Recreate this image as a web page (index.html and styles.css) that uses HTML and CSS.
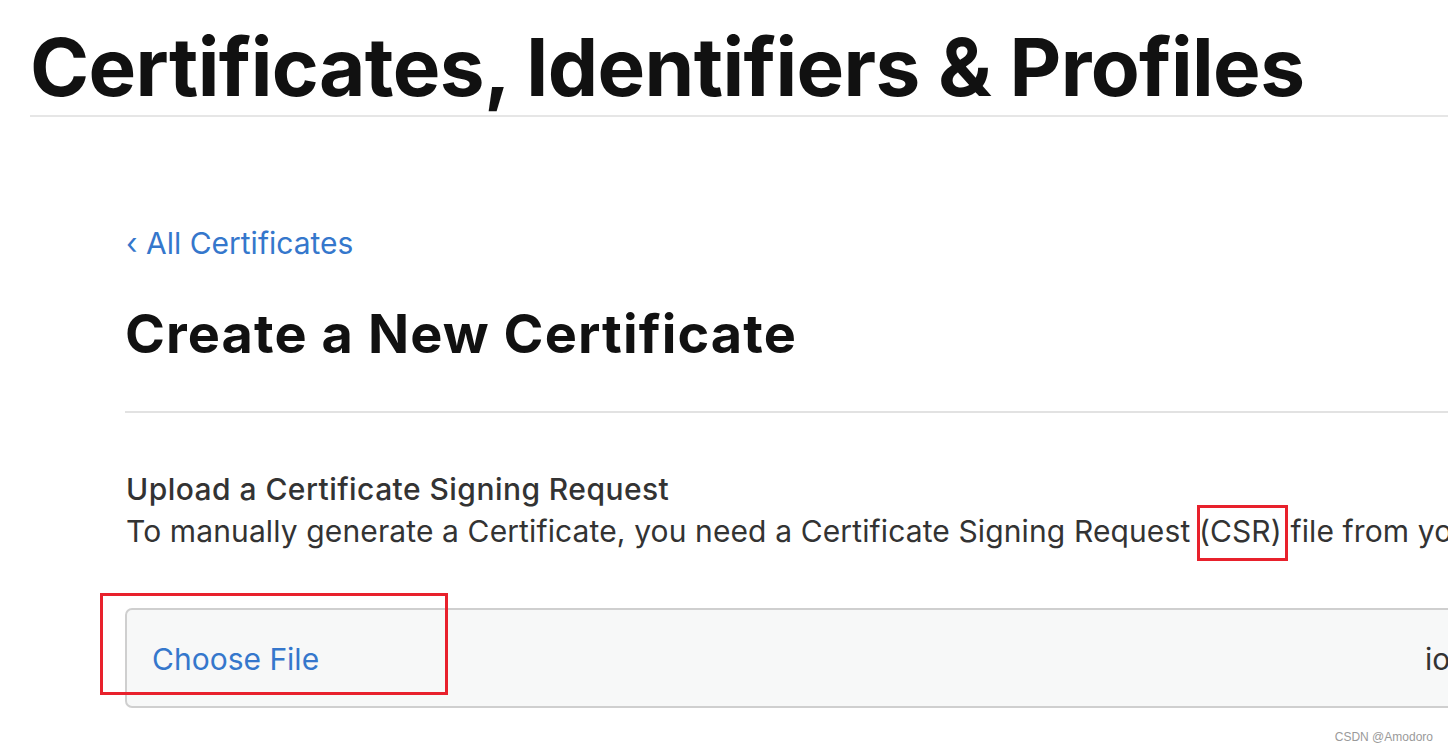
FILE: index.html
```html
<!DOCTYPE html>
<html lang="en">
<head>
<meta charset="utf-8">
<title>Create a New Certificate</title>
<link rel="stylesheet" href="styles.css">
</head>
<body>
<header class="page-header">
  <h1 class="page-title">Certificates, Identifiers &amp; Profiles</h1>
</header>
<main class="content">
  <a class="back-link" href="#"><span class="chev">‹</span> All Certificates</a>
  <h2 class="section-title">Create a New Certificate</h2>
  <section class="upload">
    <h3 class="upload-title">Upload a Certificate Signing Request</h3>
    <p class="upload-text">To manually generate a Certificate, you need a Certificate Signing Request <span class="mark">(CSR)</span> file from your Mac.</p>
    <div class="file-box">
      <span class="choose">Choose File</span>
      <span class="file-name">ios_development.certSigningRequest</span>
      <span class="mark-box"></span>
    </div>
  </section>
</main>
<div class="watermark">CSDN @Amodoro</div>
</body>
</html>
```

FILE: styles.css
```css
html, body {
  margin: 0;
  padding: 0;
  background: #ffffff;
  overflow: hidden;
}
body {
  width: 1448px;
  height: 750px;
  position: relative;
  font-family: Inter, "Noto Sans", "Liberation Sans", sans-serif;
  color: #333333;
}
.page-header {
  margin-left: 30px;
  padding-top: 27px;
  border-bottom: 2px solid #e6e6e6;
}
.page-title {
  margin: 0;
  font-size: 80px;
  line-height: 80px;
  font-weight: 700;
  color: #111111;
  letter-spacing: -0.62px;
  padding-bottom: 8px;
  white-space: nowrap;
}
.content {
  margin-left: 125px;
  padding-top: 108px;
}
.back-link {
  display: block;
  font-size: 30px;
  line-height: 36px;
  color: #3577cc;
  text-decoration: none;
  padding-left: 1px;
}
.chev {
  font-size: 30px;
}
.section-title {
  margin: 43px 0 0 0;
  font-size: 54px;
  line-height: 60px;
  font-weight: 700;
  color: #111111;
  padding-bottom: 47px;
  border-bottom: 2px solid #e2e2e2;
  letter-spacing: 1.1px;
}
.upload {
  padding-top: 55px;
}
.upload-title {
  margin: 0;
  font-size: 30px;
  line-height: 42px;
  font-weight: 500;
  color: #333333;
  padding-left: 1px;
  letter-spacing: 0.45px;
}
.upload-text {
  margin: 0;
  font-size: 30px;
  line-height: 42px;
  font-weight: 400;
  color: #333333;
  white-space: nowrap;
  padding-left: 1px;
  letter-spacing: 0.12px;
}
.mark {
  position: relative;
}
.mark::after {
  content: "";
  position: absolute;
  left: -2px;
  right: -6px;
  top: -8px;
  bottom: -12px;
  border: 3px solid #e8212c;
}
.file-box {
  position: relative;
  margin-top: 56px;
  width: 1500px;
  height: 100px;
  box-sizing: border-box;
  border: 2px solid #cfcfcf;
  border-radius: 7px;
  background: #f7f8f8;
  display: grid;
  grid-template-columns: 1273px auto;
  align-items: center;
  padding-left: 25px;
}
.choose {
  font-size: 30px;
  color: #3577cc;
  padding-top: 2px;
}
.file-name {
  font-size: 30px;
  color: #333333;
  white-space: nowrap;
  padding-top: 2px;
}
.mark-box {
  position: absolute;
  left: -27px;
  top: -17px;
  width: 348px;
  height: 102px;
  box-sizing: border-box;
  border: 3px solid #e8212c;
}
.watermark {
  position: absolute;
  right: 15px;
  bottom: 6px;
  font-family: "Liberation Sans", Arial, sans-serif;
  font-size: 12px;
  color: #9a9a9a;
}
```
